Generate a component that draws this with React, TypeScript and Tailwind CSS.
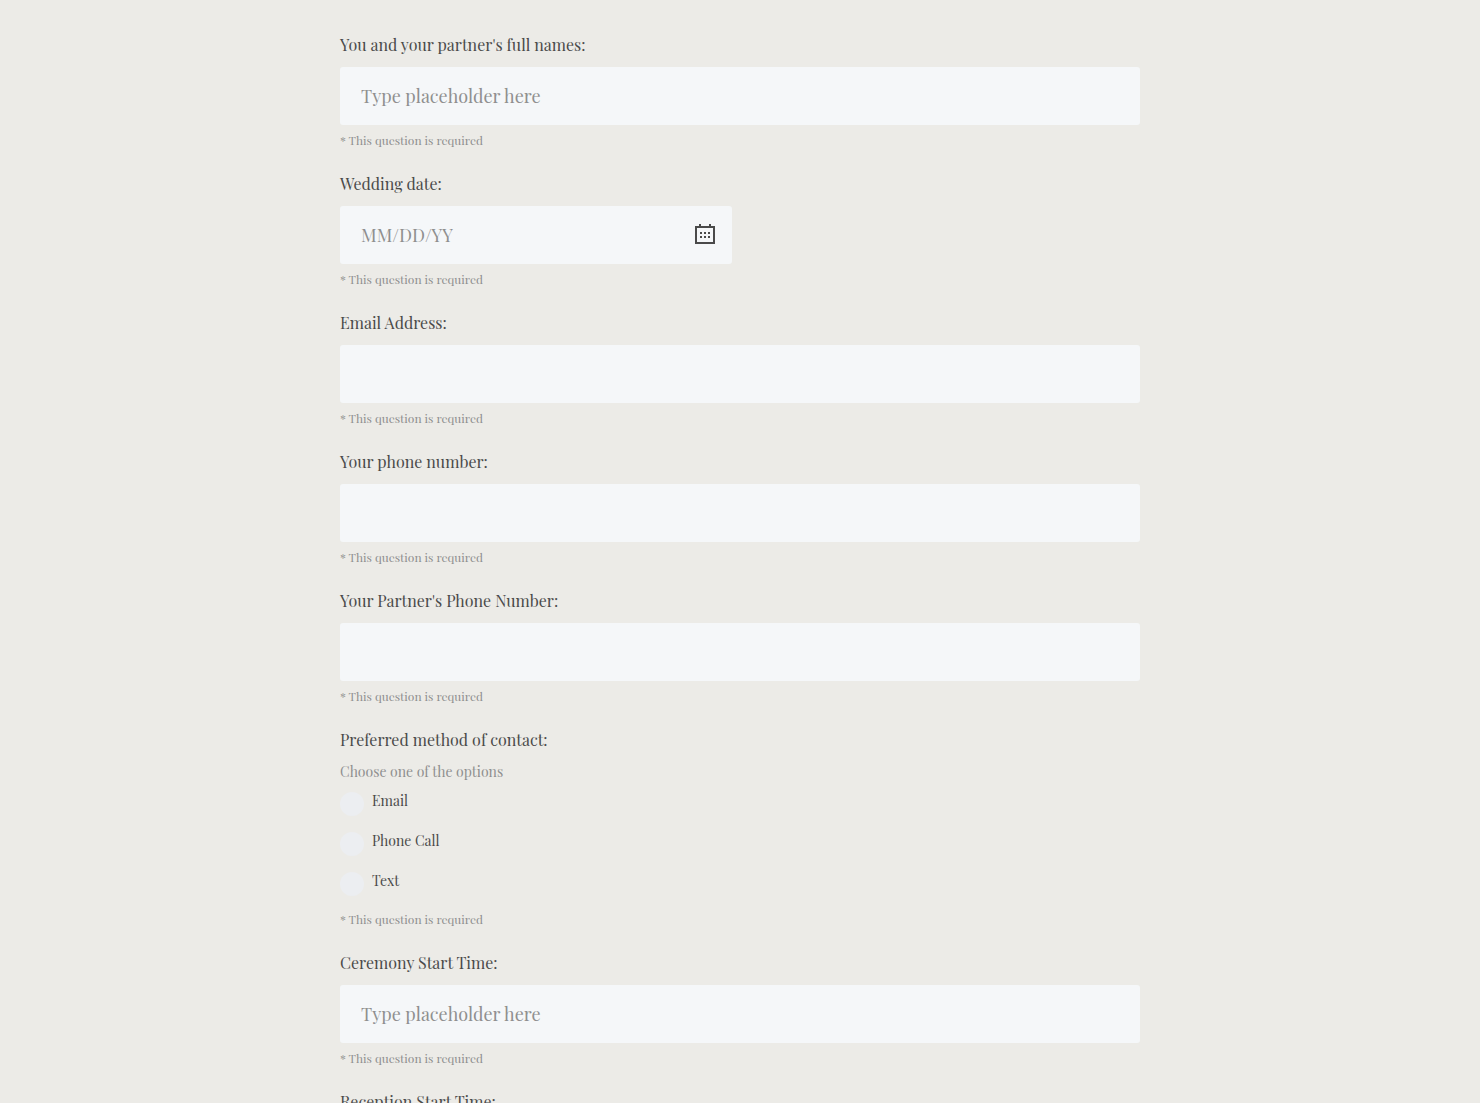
import React from 'react';
import { clsx } from 'clsx';

interface Field {
  id: string;
  label: string;
  type: 'text' | 'date' | 'radio';
  placeholder?: string;
  options?: string[];
}

const fields: Field[] = [
  { id: 'names', label: "You and your partner's full names:", type: 'text', placeholder: 'Type placeholder here' },
  { id: 'date', label: 'Wedding date:', type: 'date', placeholder: 'MM/DD/YY' },
  { id: 'email', label: 'Email Address:', type: 'text' },
  { id: 'phone', label: 'Your phone number:', type: 'text' },
  { id: 'partner-phone', label: "Your Partner's Phone Number:", type: 'text' },
  { id: 'contact', label: 'Preferred method of contact:', type: 'radio', options: ['Email', 'Phone Call', 'Text'] },
  { id: 'ceremony', label: 'Ceremony Start Time:', type: 'text', placeholder: 'Type placeholder here' },
  { id: 'reception', label: 'Reception Start Time:', type: 'text', placeholder: 'Type placeholder here' },
];

const CalendarIcon: React.FC = () => (
  <svg width="20" height="20" viewBox="0 0 20 20" fill="#4a4a4a" shapeRendering="crispEdges">
    <path fillRule="evenodd" d="M4 0h2v2h8V0h2v2h4v18H0V2h4zM2 4v14h16V4z" />
    <path d="M5 8h2v2H5zM9 8h2v2H9zM13 8h2v2h-2zM5 12h2v2H5zM9 12h2v2H9zM13 12h2v2h-2z" />
  </svg>
);

const TextField: React.FC<{ field: Field }> = ({ field }) => (
  <div
    className={clsx(
      'mt-2.5 flex h-[58px] items-center rounded-[3px] bg-[#f5f7f9] pr-[17px] pl-[21px]',
      field.type === 'date' ? 'w-[392px]' : 'w-full'
    )}
  >
    <input
      id={field.id}
      type="text"
      placeholder={field.placeholder}
      className="h-full min-w-0 flex-1 bg-transparent text-lg text-[#4a4a4a] outline-none placeholder:text-[#8f8f8f]"
    />
    {field.type === 'date' && (
      <button type="button" aria-label="Open calendar" className="-mt-0.5">
        <CalendarIcon />
      </button>
    )}
  </div>
);

const RadioField: React.FC<{ field: Field }> = ({ field }) => (
  <>
    <p className="mt-2.5 text-sm leading-5 text-[#8f8f8f]">Choose one of the options</p>
    <div className="mt-2.5 mb-2 flex flex-col gap-4">
      {field.options?.map((option) => (
        <label key={option} className="flex h-6 items-start gap-2 text-sm text-[#4a4a4a]">
          <input type="radio" name={field.id} className="size-6 appearance-none rounded-full bg-[#eceef1]" />
          <span className="-mt-px leading-5">{option}</span>
        </label>
      ))}
    </div>
  </>
);

const App: React.FC = () => {
  return (
    <div className="h-screen overflow-hidden bg-[#ecebe7] pt-[33px] font-['Playfair_Display','Liberation_Serif',serif] antialiased">
      <form className="mx-auto flex w-[800px] flex-col gap-6">
        {fields.map((field) => (
          <div key={field.id} className="flex flex-col">
            <label htmlFor={field.id} className="text-base leading-6 text-[#4a4a4a]">
              {field.label}
            </label>
            {field.type === 'radio' ? <RadioField field={field} /> : <TextField field={field} />}
            <p className="mt-[7px] text-xs leading-4 text-[#8f8f8f]">* This question is required</p>
          </div>
        ))}
      </form>
    </div>
  );
};

export default App;
